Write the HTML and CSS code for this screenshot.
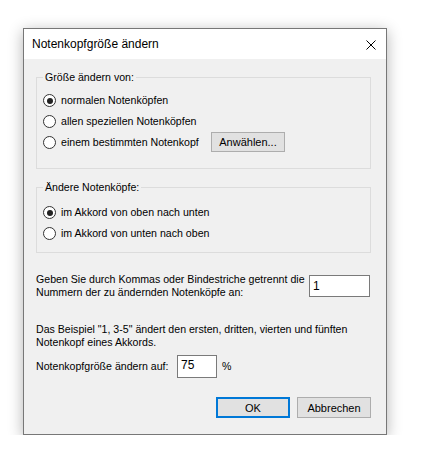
FILE: index.html
```html
<!DOCTYPE html>
<html lang="de">
<head>
    <meta charset="UTF-8">
    <meta name="viewport" content="width=device-width, initial-scale=1.0">
    <title>Notenkopfgröße ändern</title>
    <link rel="stylesheet" href="styles.css">
</head>
<body>
    <div class="dialog">
        <div class="titlebar">
            <span class="title">Notenkopfgröße ändern</span>
            <svg class="close" width="10" height="10" viewBox="0 0 10 10">
                <path d="M0.5 0.5 L9.5 9.5 M9.5 0.5 L0.5 9.5" stroke="#000" stroke-width="1" fill="none"/>
            </svg>
        </div>

        <div class="content">
            <fieldset class="group group-size">
                <legend>Größe ändern von:</legend>
                <div class="row">
                    <span class="radio checked"></span>
                    <span>normalen Notenköpfen</span>
                </div>
                <div class="row">
                    <span class="radio"></span>
                    <span>allen speziellen Notenköpfen</span>
                </div>
                <div class="row row-last">
                    <span class="radio"></span>
                    <span class="choice-wide">einem bestimmten Notenkopf</span>
                    <button type="button" class="btn">Anwählen...</button>
                </div>
            </fieldset>

            <fieldset class="group group-order">
                <legend>Ändere Notenköpfe:</legend>
                <div class="row">
                    <span class="radio checked"></span>
                    <span>im Akkord von oben nach unten</span>
                </div>
                <div class="row">
                    <span class="radio"></span>
                    <span>im Akkord von unten nach oben</span>
                </div>
            </fieldset>

            <div class="numbers">
                <p class="text">Geben Sie durch Kommas oder Bindestriche getrennt die<br>Nummern der zu ändernden Notenköpfe an:</p>
                <input type="text" class="field field-numbers" value="1">
            </div>

            <p class="text example">Das Beispiel "1, 3-5" ändert den ersten, dritten, vierten und fünften<br>Notenkopf eines Akkords.</p>

            <div class="percent">
                <span class="percent-label">Notenkopfgröße ändern auf:</span>
                <input type="text" class="field field-percent" value="75">
                <span class="unit">%</span>
            </div>

            <div class="actions">
                <button type="button" class="btn btn-default">OK</button>
                <button type="button" class="btn">Abbrechen</button>
            </div>
        </div>
    </div>
</body>
</html>
```

FILE: styles.css
```css
body {
    margin: 0;
    padding: 0;
    background-color: #fff;
    font-family: "Liberation Sans", Arial, sans-serif;
    font-size: 10.6px;
    line-height: 13px;
    color: #000;
}

.dialog {
    box-sizing: border-box;
    width: 364px;
    height: 407px;
    margin: 28px 0 0 23px;
    border: 1px solid #777;
    background-color: #f0f0f0;
    box-shadow: 0 3px 14px rgba(0, 0, 0, 0.3);
}

.titlebar {
    height: 30px;
    background-color: #fff;
    display: flex;
    align-items: center;
    justify-content: space-between;
    padding: 0 10px 0 8px;
}

.title {
    font-size: 12px;
}

.close {
    display: block;
    margin-top: 1px;
}

.content {
    padding: 0 15px 0 12px;
}

.group {
    box-sizing: border-box;
    width: 335px;
    margin: 12px 0 0 0;
    padding: 6px 0 16px 6px;
    border: 1px solid #dcdcdc;
    min-width: 0;
}

.group legend {
    padding: 0 2px;
    line-height: 13px;
}

.group-order {
    padding-top: 8px;
    padding-bottom: 8px;
}

.row {
    height: 21px;
    display: flex;
    align-items: center;
}

.row-last {
    height: 20px;
}

.radio {
    box-sizing: border-box;
    width: 13px;
    height: 13px;
    margin-right: 5px;
    border: 1px solid #333;
    border-radius: 50%;
    background-color: #fff;
    display: flex;
    align-items: center;
    justify-content: center;
    flex-shrink: 0;
}

.radio.checked::after {
    content: "";
    width: 6px;
    height: 6px;
    border-radius: 50%;
    background-color: #222;
}

.choice-wide {
    width: 150px;
}

.btn {
    box-sizing: border-box;
    width: 74px;
    height: 21px;
    padding: 0;
    border: 1px solid #adadad;
    background-color: #e1e1e1;
    font-family: inherit;
    font-size: 11px;
    color: #000;
}

.row .btn {
    height: 20px;
}

.btn-default {
    border: 2px solid #0078d7;
}

.text {
    margin: 0;
    white-space: nowrap;
}

.numbers {
    margin-top: 20px;
    display: flex;
    justify-content: space-between;
    align-items: flex-start;
    width: 334px;
}

.field {
    box-sizing: border-box;
    border: 1px solid #7a7a7a;
    background-color: #fff;
    font-family: inherit;
    font-size: 12px;
    padding: 0 3px;
    color: #000;
}

.field-numbers {
    width: 61px;
    height: 22px;
    margin-top: 2px;
}

.example {
    margin-top: 24px;
}

.percent {
    margin-top: 6px;
    display: flex;
    align-items: center;
}

.percent-label {
    width: 141px;
}

.field-percent {
    width: 40px;
    height: 23px;
    padding-bottom: 3px;
}

.unit {
    margin-left: 5px;
}

.actions {
    margin-top: 19px;
    width: 335px;
    display: flex;
    justify-content: flex-end;
    gap: 7px;
}
```
